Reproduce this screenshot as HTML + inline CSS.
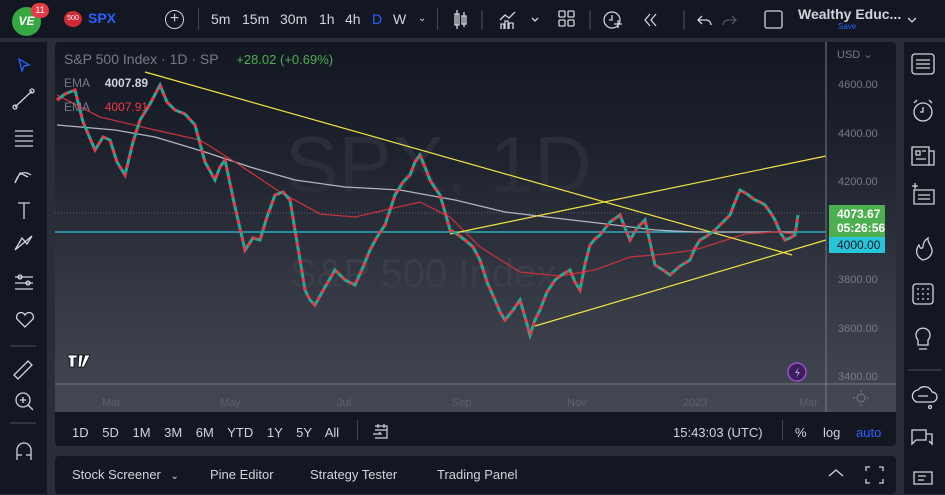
<!DOCTYPE html>
<html><head><meta charset="utf-8"><style>
*{margin:0;padding:0;box-sizing:border-box}
body{width:945px;height:494px;overflow:hidden;background:#2a2e39;font-family:"Liberation Sans",sans-serif;position:relative;color:#d1d4dc}
.abs{position:absolute}
.top{left:0;top:0;width:945px;height:38px;background:#131722}
.tb{font-size:14px;color:#d1d4dc;top:11px}
.left{left:0;top:42px;width:47px;height:452px;background:#131722}
.right{left:904px;top:42px;width:41px;height:452px;background:#131722}
.chart{left:55px;top:42px;width:841px;height:370px;border-radius:4px 4px 0 0;overflow:hidden;background:linear-gradient(#131722 0%,#1e222d 30%,#363a45 70%,#454852 100%)}
.bar1{left:55px;top:412px;width:841px;height:34px;background:#131722;border-radius:0 0 4px 4px}
.bar2{left:55px;top:456px;width:841px;height:38px;background:#131722;border-radius:4px}
.s{font-size:13px;color:#d1d4dc}
.pl{font-size:11px;color:#787b86;left:838px}
</style></head><body>
<div class="abs top"></div>
<div class="abs" style="left:12px;top:7px;width:29px;height:29px;border-radius:50%;background:#35a844;color:#fff;font-weight:bold;font-size:12px;text-align:center;line-height:29px;font-style:italic">VE</div>
<div class="abs" style="left:31px;top:3px;width:18px;height:15px;border-radius:8px;background:#e53945;color:#fff;font-size:9px;text-align:center;line-height:15px">11</div>
<div class="abs" style="left:64px;top:11px;width:18px;height:16px;border-radius:50%;background:#d02a35;color:#fff;font-size:7px;text-align:center;line-height:16px">500</div>
<div class="abs" style="left:88px;top:10px;font-weight:bold;font-size:14px;color:#2962ff">SPX</div>
<div class="abs" style="left:165px;top:10px;width:19px;height:19px;border:1.5px solid #d1d4dc;border-radius:50%;text-align:center;line-height:15px;font-size:16px">+</div>
<div class="abs" style="left:198px;top:8px;width:1px;height:22px;background:#434651"></div>
<div class="abs tb" style="left:211px">5m</div><div class="abs tb" style="left:242px">15m</div><div class="abs tb" style="left:280px">30m</div><div class="abs tb" style="left:319px">1h</div><div class="abs tb" style="left:345px">4h</div><div class="abs tb" style="left:372px;color:#2962ff">D</div><div class="abs tb" style="left:393px">W</div><div class="abs tb" style="left:418px;font-size:10px;top:13px">⌄</div>
<div class="abs" style="left:437px;top:8px;width:1px;height:22px;background:#434651"></div>
<svg class="abs" style="left:450px;top:8px" width="480" height="24" fill="none" stroke="#d1d4dc" stroke-width="1.3">
<rect x="5" y="6" width="4" height="11"/><line x1="7" y1="2" x2="7" y2="21"/><rect x="12" y="8" width="4" height="8"/><line x1="14" y1="4" x2="14" y2="19"/>
<line x1="32" y1="2" x2="32" y2="22" stroke="#434651"/>
<path d="M50 12l5-5 4 3 6-6M51 21v-5h3v5M55 21v-8h3v8M59 21v-6h4v6"/><path d="M82 10l3 3 3-3" />
<rect x="109" y="3" width="6" height="6" rx="1"/><rect x="118" y="3" width="6" height="6" rx="1"/><rect x="109" y="12" width="6" height="6" rx="1"/><rect x="118" y="12" width="6" height="6" rx="1"/>
<line x1="140" y1="2" x2="140" y2="22" stroke="#434651"/>
<circle cx="162" cy="12" r="8"/><path d="M162 7v5h-3M164 16h8M168 12v8"/>
<path d="M200 6l-5 6 5 6M206 6l-5 6 5 6"/>
<line x1="234" y1="2" x2="234" y2="22" stroke="#434651"/>
<path d="M252 8l-4 4 4 4M248 12h8a5 5 0 0 1 5 5"/><path d="M282 8l4 4-4 4M286 12h-8a5 5 0 0 0-5 5" stroke="#50535e"/>
<rect x="315" y="3" width="17" height="17" rx="2"/>
<path d="M458 10l4 4 4-4"/>
</svg>
<div class="abs" style="left:798px;top:6px;font-weight:bold;font-size:14px;color:#d1d4dc">Wealthy Educ...</div>
<div class="abs" style="left:838px;top:22px;font-size:8px;color:#2962ff">Save</div>

<div class="abs left"></div>
<svg class="abs" style="left:10px;top:55px" width="30" height="440" fill="none" stroke="#d1d4dc" stroke-width="1.3">
<path d="M9 4l10 6-5 1-2 5z" stroke="#2962ff"/>
<path d="M5 52L22 36"/><circle cx="5" cy="52" r="2"/><circle cx="22" cy="36" r="2"/>
<path d="M5 76h18M5 81h18M5 86h18M5 91h18"/>
<path d="M5 128c4-12 10-12 16-8M5 128l5-10 8 4"/>
<path d="M8 148h12M14 148v16"/>
<path d="M5 195l7-12 5 6 5-8M5 195l17-14"/>
<path d="M5 222h18M5 228h18M5 234h18"/><circle cx="10" cy="222" r="2"/><circle cx="18" cy="228" r="2"/>
<path d="M15 272l-8-8a4 4 0 0 1 8-4 4 4 0 0 1 8 4z"/>
<line x1="-2" y1="291" x2="26" y2="291" stroke="#434651"/>
<path d="M4 320l14-14 4 4-14 14z"/>
<circle cx="13" cy="345" r="7"/><path d="M18 350l5 5M13 342v6M10 345h6"/>
<line x1="-2" y1="368" x2="26" y2="368" stroke="#434651"/>
<path d="M7 405v-10a7 7 0 0 1 14 0v10M7 400h5M16 400h5"/>
</svg>

<div class="abs chart">
<svg width="841" height="370" style="position:absolute;left:0;top:0">
<text x="230" y="150" font-size="80" fill="#2a2e39" font-family="Liberation Sans">SPX, 1D</text>
<text x="235" y="245" font-size="40" fill="#3a3e49" font-family="Liberation Sans">S&amp;P 500 Index</text>
<line x1="0" y1="171" x2="771" y2="171" stroke="#5d606b" stroke-dasharray="1 2"/>
<line x1="0" y1="190" x2="771" y2="190" stroke="#26c6da" stroke-width="1.2"/>
<polyline fill="none" stroke="#b2b5be" stroke-width="1.3" points="2,83 60,88 100,95 150,110 195,125 240,138 290,145 345,148 400,158 450,170 500,176 560,183 600,188 640,190 690,190 740,190"/>
<polyline fill="none" stroke="#c2323d" stroke-width="1.3" points="2,53 45,75 100,88 145,98 180,120 225,150 265,172 300,175 330,168 365,160 395,175 425,205 465,230 505,234 540,228 575,215 610,212 640,208 665,200 690,192 720,190 740,192"/>
<g stroke="#f0e442" stroke-width="1.2"><line x1="90" y1="30" x2="737" y2="213"/><line x1="395" y1="192" x2="771" y2="114"/><line x1="480" y1="284" x2="771" y2="198"/></g>
<polyline fill="none" stroke="#22ab94" stroke-width="3" points="2,58 10,52 20,48 28,80 40,108 48,95 55,98 62,120 70,133 78,100 85,78 95,62 105,43 112,60 120,68 130,72 140,83 150,120 160,138 165,125 170,118 180,165 190,208 198,196 205,198 212,175 220,153 228,150 235,158 242,200 250,248 255,258 260,263 270,245 280,228 290,238 300,243 308,225 315,208 322,195 330,183 336,165 340,153 348,140 355,133 360,120 365,113 370,125 375,138 380,146 385,153 390,170 395,188 402,192 410,198 418,205 425,218 432,240 440,258 445,270 450,278 458,268 465,258 470,275 475,293 480,278 485,268 492,250 500,238 508,232 515,228 520,240 525,248 530,222 535,203 540,197 545,193 555,180 565,173 570,186 575,198 582,186 590,178 595,200 600,223 608,228 615,233 625,224 635,218 640,206 645,198 652,194 660,188 668,180 675,173 680,160 685,148 692,152 700,158 705,160 710,163 715,170 720,178 725,190 730,198 735,196 740,193 742,180 743,173"/>
<polyline fill="none" stroke="#f23645" stroke-width="3" stroke-dasharray="4 5" points="2,58 10,52 20,48 28,80 40,108 48,95 55,98 62,120 70,133 78,100 85,78 95,62 105,43 112,60 120,68 130,72 140,83 150,120 160,138 165,125 170,118 180,165 190,208 198,196 205,198 212,175 220,153 228,150 235,158 242,200 250,248 255,258 260,263 270,245 280,228 290,238 300,243 308,225 315,208 322,195 330,183 336,165 340,153 348,140 355,133 360,120 365,113 370,125 375,138 380,146 385,153 390,170 395,188 402,192 410,198 418,205 425,218 432,240 440,258 445,270 450,278 458,268 465,258 470,275 475,293 480,278 485,268 492,250 500,238 508,232 515,228 520,240 525,248 530,222 535,203 540,197 545,193 555,180 565,173 570,186 575,198 582,186 590,178 595,200 600,223 608,228 615,233 625,224 635,218 640,206 645,198 652,194 660,188 668,180 675,173 680,160 685,148 692,152 700,158 705,160 710,163 715,170 720,178 725,190 730,198 735,196 740,193 742,180 743,173"/>
<line x1="0" y1="342" x2="841" y2="342" stroke="#787b86"/>
<line x1="771" y1="0" x2="771" y2="370" stroke="#787b86"/>
<path d="M13 313h9v3h-3v9h-4v-9h-2zM24 313h4l-2 12h-3zM30 313h5l-6 12h-3z" fill="#fff" stroke="#000" stroke-width="0.8"/>
<circle cx="742" cy="330" r="9" fill="#3b1f5c" stroke="#9c4fd6" stroke-width="1.5"/><path d="M744 325l-4 6h3l-2 5 4-6h-3z" fill="#c98ff5"/>
<circle cx="806" cy="356" r="4" fill="none" stroke="#787b86"/>
<g stroke="#787b86"><line x1="806" y1="348" x2="806" y2="350"/><line x1="806" y1="362" x2="806" y2="364"/><line x1="798" y1="356" x2="800" y2="356"/><line x1="812" y1="356" x2="814" y2="356"/></g>
</svg>
<div class="abs" style="left:9px;top:9px;font-size:14px;color:#787b86">S&amp;P 500 Index · 1D · SP <span style="color:#4caf50;font-size:13px;margin-left:14px">+28.02 (+0.69%)</span></div>
<div class="abs" style="left:9px;top:34px;font-size:12px;color:#787b86">EMA <b style="color:#d1d4dc;margin-left:12px">4007.89</b></div>
<div class="abs" style="left:9px;top:58px;font-size:12px;color:#787b86">EMA <b style="color:#f23645;margin-left:12px;font-weight:normal">4007.91</b></div>
<div class="abs" style="left:782px;top:6px;font-size:11px;color:#787b86">USD ⌄</div>
<div class="abs" style="left:31px;top:355px;font-size:11px;color:#5d606b;width:760px">
<span class="abs" style="left:16px">Mar</span><span class="abs" style="left:134px">May</span><span class="abs" style="left:251px">Jul</span><span class="abs" style="left:366px">Sep</span><span class="abs" style="left:481px">Nov</span><span class="abs" style="left:597px">2023</span><span class="abs" style="left:713px">Mar</span></div>
</div>
<div class="abs pl" style="top:79px">4600.00</div>
<div class="abs pl" style="top:128px">4400.00</div>
<div class="abs pl" style="top:176px">4200.00</div>
<div class="abs pl" style="top:274px">3800.00</div>
<div class="abs pl" style="top:323px">3600.00</div>
<div class="abs pl" style="top:371px">3400.00</div>
<div class="abs" style="left:829px;top:205px;width:56px;height:32px;background:#4caf50;color:#fff;font-size:12px;font-weight:bold;padding:2px 0 0 8px;line-height:14px">4073.67<br>05:26:56</div>
<div class="abs" style="left:829px;top:237px;width:56px;height:16px;background:#26c6da;color:#131722;font-size:12px;padding-left:8px;line-height:16px">4000.00</div>

<div class="abs bar1"></div>
<div class="abs s" style="left:72px;top:425px;word-spacing:10px">1D 5D 1M 3M 6M YTD 1Y 5Y All</div>
<div class="abs" style="left:357px;top:420px;width:1px;height:20px;background:#434651"></div>
<svg class="abs" style="left:372px;top:423px" width="18" height="18" fill="none" stroke="#d1d4dc" stroke-width="1.2"><path d="M3 3h12v12H3M3 7h12M6 1v4M12 1v4M1 11h8l-2-2"/></svg>
<div class="abs s" style="left:673px;top:425px">15:43:03 (UTC)</div>
<div class="abs" style="left:782px;top:420px;width:1px;height:20px;background:#434651"></div>
<div class="abs s" style="left:795px;top:425px">%</div>
<div class="abs s" style="left:823px;top:425px">log</div>
<div class="abs s" style="left:856px;top:425px;color:#2962ff">auto</div>

<div class="abs bar2"></div>
<div class="abs s" style="left:72px;top:467px">Stock Screener <span style="font-size:10px;margin-left:6px">⌄</span></div>
<div class="abs s" style="left:210px;top:467px">Pine Editor</div>
<div class="abs s" style="left:310px;top:467px">Strategy Tester</div>
<div class="abs s" style="left:437px;top:467px">Trading Panel</div>
<svg class="abs" style="left:826px;top:462px" width="60" height="24" fill="none" stroke="#d1d4dc" stroke-width="1.3"><path d="M3 14l7-6 7 6"/><path d="M40 9V5h4M53 5h4v4M57 17v4h-4M44 21h-4v-4"/></svg>

<div class="abs right"></div>
<svg class="abs" style="left:908px;top:50px" width="34" height="444" fill="none" stroke="#d1d4dc" stroke-width="1.3">
<rect x="4" y="4" width="22" height="20" rx="3"/><path d="M8 10h14M8 14h14M8 18h14"/>
<circle cx="15" cy="62" r="9"/><path d="M15 57v5h-3M6 53l3-3M24 53l-3-3"/>
<path d="M4 97h17v18H4zM21 101h5v14H4M8 101h4v4H8zM14 101h4M8 109h10"/>
<path d="M6 140h20v14H6zM10 145h12M10 149h12M4 136h6M7 133v6"/>
<path d="M15 210c-7-3-8-10-4-15 1 4 3 4 4 2 0-4 2-7 5-9-1 5 5 8 4 14-1 4-4 7-9 8z"/>
<rect x="5" y="234" width="20" height="20" rx="3"/><path d="M9 239h2M14 239h2M19 239h2M9 244h2M14 244h2M19 244h2M9 249h2M14 249h2M19 249h2"/>
<path d="M10 290a7 7 0 1 1 10 0v5h-10zM11 299h8"/>
<line x1="0" y1="320" x2="34" y2="320" stroke="#434651"/>
<path d="M6 350a6 6 0 0 1 4-10 8 8 0 0 1 14 2 5 5 0 0 1 0 10H8zM10 346h10"/><circle cx="22" cy="357" r="1.5"/>
<path d="M4 390v-10h14v10h-10l-4 4zM18 384h6v10l-3-3"/>
<path d="M6 422h18v12H6zM10 426h8M10 430h6"/>
</svg>
</body></html>
